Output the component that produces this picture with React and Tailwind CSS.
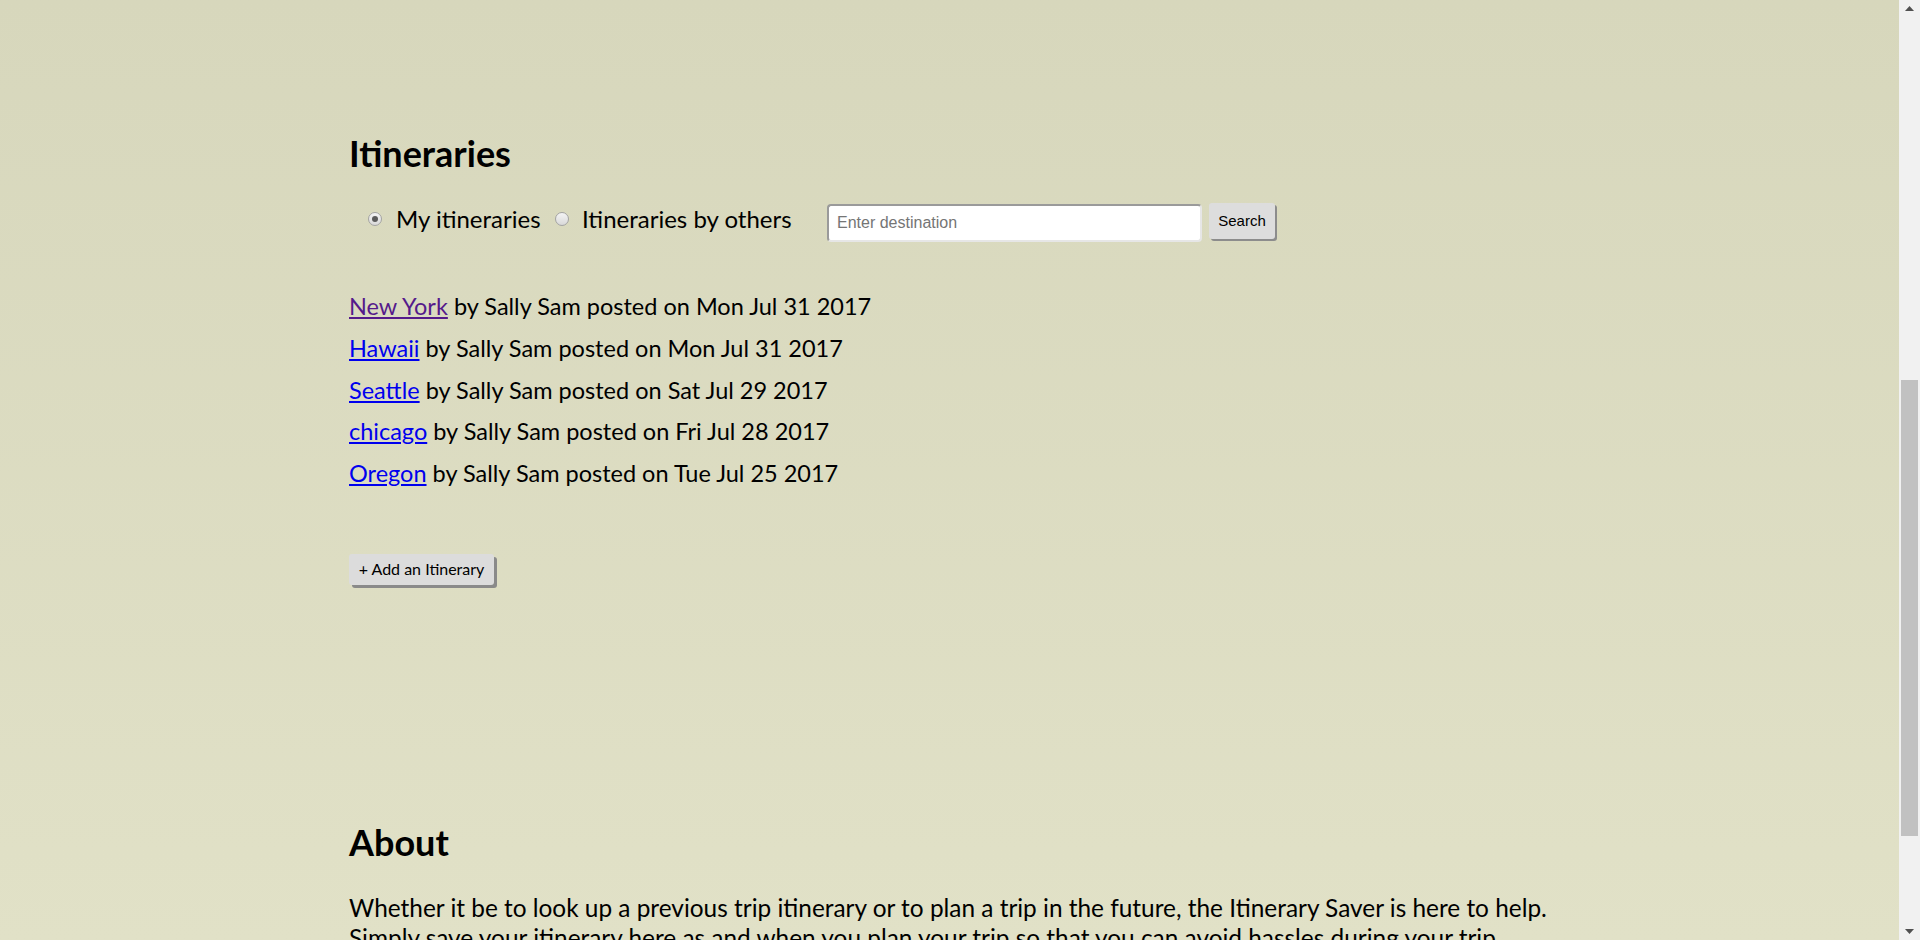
import React from 'react';

const itineraries = [
  { id: 1, place: 'New York', date: 'Mon Jul 31 2017', visited: true },
  { id: 2, place: 'Hawaii', date: 'Mon Jul 31 2017' },
  { id: 3, place: 'Seattle', date: 'Sat Jul 29 2017' },
  { id: 4, place: 'chicago', date: 'Fri Jul 28 2017' },
  { id: 5, place: 'Oregon', date: 'Tue Jul 25 2017' },
];

function Radio({ checked }) {
  return (
    <span className="flex h-[14px] w-[14px] items-center justify-center rounded-full border border-[#a3a3a3] bg-gradient-to-b from-[#f4f4f4] to-[#d9d9d9]">
      {checked && <span className="h-[6px] w-[6px] rounded-full bg-[#5a5a5a]"></span>}
    </span>
  );
}

function Arrow({ up }) {
  return (
    <div className="flex h-[17px] items-center justify-center">
      <svg width="9" height="5" viewBox="0 0 9 5">
        <polygon points={up ? '0,5 4.5,0 9,5' : '0,0 4.5,5 9,0'} fill="#505050" />
      </svg>
    </div>
  );
}

export default function App() {
  const [mode, setMode] = React.useState('mine');

  return (
    <div className="flex h-[940px] w-full overflow-hidden font-['Lato',sans-serif] text-black">
      <main className="flex-1 bg-gradient-to-b from-[#d7d7bc] to-[#e1e1c7] pl-[349px] pt-[131px]">
        <h2 className="text-[36px] font-bold leading-[44px]">Itineraries</h2>

        <div className="mt-[27px] flex items-start">
          <div className="mt-[2px] flex w-[478px] items-center pl-[19px] text-[24px] leading-[30px]">
            <label className="flex items-center" onClick={() => setMode('mine')}>
              <Radio checked={mode === 'mine'} />
              <span className="ml-[14px] w-[159px] whitespace-nowrap">My itineraries</span>
            </label>
            <label className="flex items-center" onClick={() => setMode('others')}>
              <Radio checked={mode === 'others'} />
              <span className="ml-[13px] whitespace-nowrap">Itineraries by others</span>
            </label>
          </div>
          <input
            type="text"
            placeholder="Enter destination"
            className="mt-[2px] h-[38px] w-[375px] rounded-[4px] border-2 border-t-[#9a9a9a] border-l-[#9a9a9a] border-r-[#e6e6e6] border-b-[#e6e6e6] bg-white px-[8px] font-['Liberation_Sans',Arial,sans-serif] text-[16px] text-black outline-none placeholder:text-[#757575]"
          />
          <button className="ml-[7px] mt-[1px] h-[36px] w-[66px] rounded-[3px] bg-[#dddddd] font-['Liberation_Sans',Arial,sans-serif] text-[15px] text-black shadow-[2px_2px_0_#8c8c8c]">
            Search
          </button>
        </div>

        <ul className="mt-[44px] text-[23.5px] leading-[41.75px]">
          {itineraries.map((item) => (
            <li key={item.id} className="whitespace-nowrap">
              <a
                href="#"
                className={item.visited ? 'text-[#551a8b] underline' : 'text-[#0000ee] underline'}
              >
                {item.place}
              </a>{' '}
              by Sally Sam posted on {item.date}
            </li>
          ))}
        </ul>

        <button className="mt-[59px] h-[31px] w-[145px] rounded-[3px] bg-[#dcdcdc] text-[16px] shadow-[3px_3px_0_#8a8a8a]">
          + Add an Itinerary
        </button>

        <h2 className="mt-[235px] text-[36px] font-bold leading-[44px]">About</h2>
        <p className="mt-[29px] text-[24.4px] leading-[30px]">
          <span className="whitespace-nowrap">
            Whether it be to look up a previous trip itinerary or to plan a trip in the future, the Itinerary Saver is here to help.
          </span>
          <br />
          <span className="whitespace-nowrap">
            Simply save your itinerary here as and when you plan your trip so that you can avoid hassles during your trip.
          </span>
        </p>
      </main>

      <div className="flex w-[21px] flex-col bg-[#f1f1f1]">
        <Arrow up />
        <div className="flex-1 pl-[2px] pt-[363px]">
          <div className="h-[456px] w-[17px] bg-[#c1c1c1]"></div>
        </div>
        <Arrow />
      </div>
    </div>
  );
}
